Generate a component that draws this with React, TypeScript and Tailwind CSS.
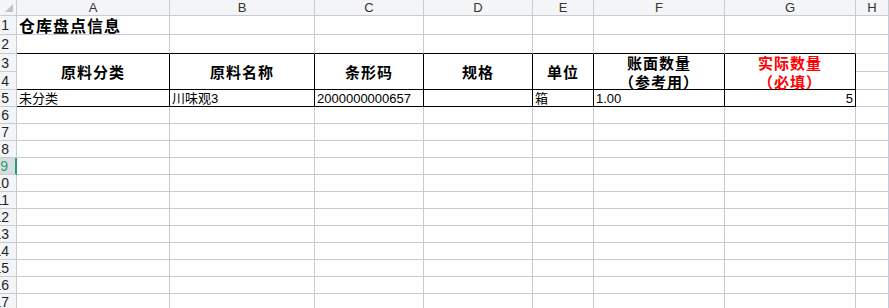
const cols = ["A", "B", "C", "D", "E", "F", "G", "H"];
const rowHeights = [19, 19, 18, 18, 17, 17, 17, 17, 17, 17, 17, 17, 17, 17, 17, 17, 17];

const cjk = "font-['Noto_Sans_CJK_SC','Liberation_Sans',sans-serif]";
const latin = "font-['Liberation_Sans','Noto_Sans_CJK_SC',sans-serif]";

type Head = { lines: string[]; red?: boolean };

const heads: Head[] = [
    { lines: ["原料分类"] },
    { lines: ["原料名称"] },
    { lines: ["条形码"] },
    { lines: ["规格"] },
    { lines: ["单位"] },
    { lines: ["账面数量", "（参考用）"] },
    { lines: ["实际数量", "（必填）"], red: true },
];

const dataRow: { text: string; right?: boolean }[] = [
    { text: "未分类" },
    { text: "川味观3" },
    { text: "2000000000657" },
    { text: "" },
    { text: "箱" },
    { text: "1.00" },
    { text: "5", right: true },
];

function RowHeader({ n }: { n: number }) {
    const active = n === 9;
    return (
        <div
            className={`flex items-center justify-end overflow-hidden whitespace-nowrap border-b border-[#c6cbd6] pr-[7px] text-[14px] leading-none ${latin} ${
                active
                    ? "border-r-2 border-r-[#21a366] bg-[#d9dde3] text-[#21a366]"
                    : "border-r border-r-[#c6cbd6] bg-[#f4f5f7] text-[#1f1f1f]"
            }`}
        >
            {n}
        </div>
    );
}

export default function App() {
    const cells: React.ReactNode[] = [];

    // column header row
    cells.push(
        <div key="corner" className="border-b border-r border-[#c6cbd6] bg-[#f4f5f7]">
            <svg width="16" height="15" viewBox="0 0 16 15" className="block">
                <polygon points="13,4 13,12 5,12" fill="#c2c2c2" />
            </svg>
        </div>
    );
    cols.forEach((c) => {
        cells.push(
            <div
                key={`h-${c}`}
                className={`flex items-center justify-center overflow-hidden border-b border-r border-[#c6cbd6] bg-[#f4f5f7] text-[13px] leading-[15px] text-[#333] ${latin}`}
            >
                {c}
            </div>
        );
    });

    rowHeights.forEach((_, i) => {
        const r = i + 1;
        cells.push(<RowHeader key={`rh-${r}`} n={r} />);

        if (r === 1) {
            cells.push(
                <div
                    key="title"
                    className={`flex items-end whitespace-nowrap border-b border-r border-[#c6cbd6] pl-[2px] text-[16px] font-bold leading-[17px] tracking-[1px] text-black ${cjk}`}
                >
                    仓库盘点信息
                </div>
            );
            cols.slice(1).forEach((c) => {
                cells.push(<div key={`1-${c}`} className="border-b border-r border-[#c6cbd6]" />);
            });
            return;
        }

        if (r === 2) {
            cols.forEach((c) => {
                cells.push(
                    <div
                        key={`2-${c}`}
                        className={`border-r border-b ${
                            c === "H" ? "border-[#c6cbd6]" : "border-r-[#c6cbd6] border-b-black"
                        }`}
                    />
                );
            });
            return;
        }

        if (r === 3) {
            heads.forEach((h, j) => {
                cells.push(
                    <div
                        key={`head-${j}`}
                        className={`row-span-2 flex flex-col items-center justify-center border-b border-r border-black text-[15px] font-bold leading-[19px] tracking-[1px] ${cjk} ${
                            h.red ? "text-[#ff0000]" : "text-black"
                        }`}
                    >
                        {h.lines.map((l) => (
                            <span key={l}>{l}</span>
                        ))}
                    </div>
                );
            });
            cells.push(<div key="3-H" className="border-b border-r border-[#c6cbd6]" />);
            return;
        }

        if (r === 4) {
            cells.push(<div key="4-H" className="border-b border-r border-[#c6cbd6]" />);
            return;
        }

        if (r === 5) {
            dataRow.forEach((d, j) => {
                cells.push(
                    <div
                        key={`5-${j}`}
                        className={`flex items-center overflow-hidden whitespace-nowrap border-b border-r border-black px-[2px] text-[13px] leading-none text-black ${latin} ${
                            d.right ? "justify-end" : "justify-start"
                        }`}
                    >
                        {d.text}
                    </div>
                );
            });
            cells.push(<div key="5-H" className="border-b border-r border-[#c6cbd6]" />);
            return;
        }

        cols.forEach((c) => {
            cells.push(<div key={`${r}-${c}`} className="border-b border-r border-[#c6cbd6]" />);
        });
    });

    return (
        <div className="h-[308px] w-[889px] overflow-hidden bg-white">
            <div className="grid grid-cols-[17px_153px_145px_109px_109px_61px_131px_131px_1fr] grid-rows-[16px_19px_19px_18px_18px_17px_17px_17px_17px_17px_17px_17px_17px_17px_17px_17px_17px_17px]">
                {cells}
            </div>
        </div>
    );
}
